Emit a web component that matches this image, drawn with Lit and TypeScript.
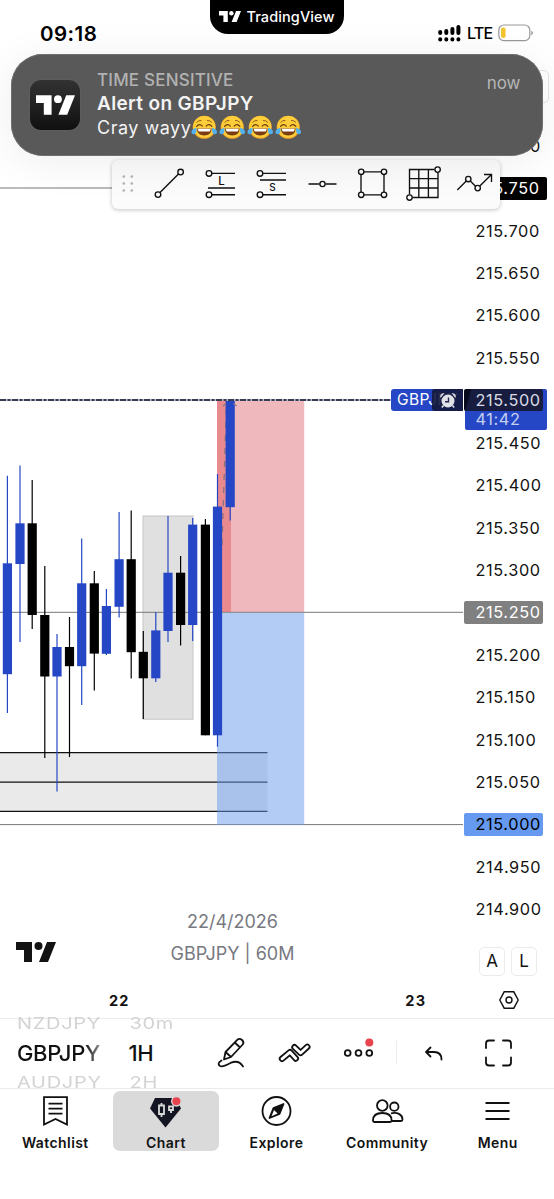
import { LitElement, html, css, svg } from "lit";
import { customElement } from "lit/decorators.js";

// center x, high, body top, body bottom, low, rising
type Candle = [number, number, number, number, number, boolean];
const candles: Candle[] = [
  [7.4, 475.7, 563.3, 674.2, 713, true],
  [20, 465.5, 523.3, 564, 642, true],
  [32.2, 480, 523.3, 615, 629, false],
  [44.8, 566, 615, 676.5, 758, false],
  [57, 634, 647, 676.5, 791.5, true],
  [69.5, 617, 647, 666.2, 757, false],
  [81.7, 538.5, 583.3, 666.2, 705, true],
  [94.3, 571, 583.3, 653.6, 690.5, false],
  [106.4, 589, 606, 653.8, 655, true],
  [119.1, 512, 559.2, 606.8, 617.5, true],
  [131.2, 510.5, 559.2, 652.2, 678.5, false],
  [143.3, 631, 651.8, 678.3, 719, false],
  [155.8, 612, 630.4, 678.3, 682, true],
  [168, 516, 572.7, 631, 642, true],
  [180.6, 556, 572.7, 625, 645.5, false],
  [192.7, 518, 524.6, 625, 641, true],
  [205.4, 519, 524.6, 735.3, 735.3, false],
  [217.5, 474, 506.6, 735.3, 746.8, true],
  [230.2, 400, 400, 507.2, 520.5, true],
];

const prices = [
  "215.800", "215.750", "215.700", "215.650", "215.600", "215.550", "215.500",
  "215.450", "215.400", "215.350", "215.300", "215.250", "215.200", "215.150",
  "215.100", "215.050", "215.000", "214.950", "214.900",
];
const priceTone: Record<string, string> = {
  "215.750": "black",
  "215.500": "live",
  "215.250": "gray",
  "215.000": "blue",
};

const logo = (cls: string) => html`<svg class=${cls} viewBox="0 0 40 20" fill="currentColor">
  <path d="M0 0H16V20H8V8H0Z" /><circle cx="22.5" cy="4" r="4" /><path d="M31 0H40L32 20H23Z" />
</svg>`;

const joy = svg`
  <circle cx="12" cy="11.5" r="10.9" fill="#f3a928" />
  <circle cx="12" cy="11.1" r="10.2" fill="#fdce3a" />
  <path d="M5 6.800q1.600-2 4-1.700M19 6.800q-1.600-2-4-1.700" fill="none" stroke="#8a5a18" stroke-width=".9" stroke-linecap="round" />
  <path d="M4.800 10.800q2.700-3.400 5.400-.4M19.200 10.800q-2.700-3.400-5.400-.4" fill="none" stroke="#6a3d10" stroke-width="1.100" stroke-linecap="round" />
  <path d="M5 12.600h14q-.5 6.600-7 6.600t-7-6.600Z" fill="#7a3c12" />
  <path d="M5.800 12.900h12.400l-.9 2.700H6.700Z" fill="#fff" />
  <path d="M4.500 12q.9 5.800-2.300 6.200-2.600 0-2.200-2.600.6-2.600 4.500-3.600ZM19.500 12q-.9 5.800 2.300 6.200 2.600 0 2.200-2.600-.6-2.600-4.500-3.600Z" fill="#52b2ef" />`;

@customElement("price-plot")
class PricePlot extends LitElement {
  static styles = css`
    :host { display: block; }
    svg { display: block; width: 463px; height: 857px; }
  `;
  render() {
    return html`<svg viewBox="0 125 463 857">
      <rect x="143" y="516" width="50" height="203.2" fill="#e0e0e0" stroke="#c6c6c6" />
      <rect x="0" y="752.5" width="267.5" height="59" fill="#eaeaea" />
      <path d="M0 752.7H267.5M0 782.1H267.5M0 811.4H267.5" stroke="#111" stroke-width="1.3" />
      <path d="M0 188H463M0 612.3H463M0 824.6H463" stroke="#777" stroke-width="1" />
      <rect x="217" y="400" width="87.2" height="212" fill="#d64d58" fill-opacity=".4" />
      <rect x="217" y="400" width="14" height="212" fill="#e0454b" fill-opacity=".4" />
      <rect x="217" y="612.8" width="87.2" height="212" fill="#659aee" fill-opacity=".5" />
      <path d="M222 545L226.500 402" stroke="#8c7280" stroke-width="1.3" stroke-dasharray="6 7" />
      ${candles.map(([x, high, top, bottom, low, up]) => {
        const c = up ? "#2547c5" : "#000";
        return svg`<path d="M${x} ${high}V${low}" stroke=${c} stroke-width="1.2" />
          <rect x=${x - 4.6} y=${top} width="9.2" height=${bottom - top} fill=${c} />`;
      })}
      <path d="M223 406L226 403.500M233.500 403.500L236.500 406" stroke="#8c7280" stroke-width="1.200" />
      <path d="M0 400H391" stroke="#b6b8c4" stroke-width="1.8" />
      <path d="M0 400H391" stroke="#11142e" stroke-width="1.6" stroke-dasharray="6 1.5 3 1.5" />
    </svg>`;
  }
}

@customElement("drawing-toolbar")
class DrawingToolbar extends LitElement {
  static styles = css`
    :host { display: block; width: 388px; height: 49px; background: #fbfbfb; border-radius: 6px; box-shadow: 0 1px 4px rgba(0, 0, 0, 0.24); }
    svg { display: block; }
  `;
  render() {
    return html`<svg width="388" height="49" viewBox="112 160 388 49" fill="none" stroke="#111" stroke-width="1.35">
      <g fill="#b2b2b2" stroke="none">
        ${[176.5, 183.5, 190.5].map((y) => svg`<circle cx="123.8" cy=${y} r="1.3" /><circle cx="131.8" cy=${y} r="1.3" />`)}
      </g>
      <path d="M160 192.5L178.5 174" /><circle cx="158" cy="194.6" r="2.8" /><circle cx="180.6" cy="172" r="2.8" />
      <circle cx="209" cy="173.4" r="2.8" /><path d="M212 173.4H235M208 188H235M212 194.7H235" /><circle cx="209" cy="194.7" r="2.8" />
      <circle cx="260" cy="173.4" r="2.8" /><path d="M263 173.4H286M260 180H286M263 194.7H286" /><circle cx="260" cy="194.7" r="2.8" />
      <path d="M308.5 184H319.5M325.5 184H336.5" /><circle cx="322.5" cy="184" r="2.6" />
      <path d="M361 174.5V192M364 171.8H381M384 174.5V192M364 194.8H381" />
      <circle cx="361.2" cy="171.8" r="2.7" /><circle cx="384" cy="171.8" r="2.7" /><circle cx="361.2" cy="194.8" r="2.7" /><circle cx="384" cy="194.8" r="2.7" />
      <path d="M409.5 194.5V169.5H434.5M438 172.5V197.5H412.5M418.8 169.5V197.5M428.4 169.5V197.5M409.5 178.6H438M409.5 188H438" />
      <circle cx="437.6" cy="169.6" r="2.7" /><circle cx="409.5" cy="197.5" r="2.7" />
      <path d="M457.3 190L466.3 181M470.3 181L475.5 186.2M479.8 186L491.5 174.5M484 174.5H491.5V182" />
      <circle cx="468.3" cy="179" r="2.7" /><circle cx="477.7" cy="188.1" r="2.7" />
      <g fill="#111" stroke="none" font-family="Inter, sans-serif" text-anchor="middle">
        <text x="221.5" y="185" font-size="11.5" font-weight="500">L</text>
        <text x="272.5" y="191" font-size="10" font-weight="500">S</text>
      </g>
    </svg>`;
  }
}

@customElement("alert-banner")
class AlertBanner extends LitElement {
  static styles = css`
    :host { display: flex; box-sizing: border-box; width: 532px; height: 102px; padding: 0 22.5px 0 19px; gap: 17px; border-radius: 32px; background: #595959; color: #f3f3f3; box-shadow: inset 0 0 0 0.7px #777, 0 6px 44px rgba(0, 0, 0, 0.07); font: 400 18px/24px Inter, sans-serif; }
    .app { width: 50px; height: 50px; margin-top: 26px; border-radius: 11px; background: linear-gradient(#323232, #101010); color: #fff; display: grid; place-items: center; box-shadow: 0 0 1px #888; }
    .mark { width: 39px; height: 20px; }
    .copy { flex: 1; padding-top: 14px; white-space: nowrap; }
    .kind { font-size: 17px; color: #b2b2b2; font-weight: 500; letter-spacing: 0.2px; }
    .title { font-size: 19px; font-weight: 600; letter-spacing: 0.35px; }
    .body { display: flex; align-items: center; letter-spacing: 0.5px; height: 24px; }
    .face { width: 26.5px; height: 25.500px; margin-right: 1.5px; }
    .time { margin-top: 17px; color: #b6b6b6; font-size: 17px; }
  `;
  render() {
    return html`<div class="app">${logo("mark")}</div>
      <div class="copy">
        <div class="kind">TIME SENSITIVE</div>
        <div class="title">Alert on GBPJPY</div>
        <div class="body">Cray wayy${[0, 1, 2, 3].map(() => html`<svg class="face" viewBox="-0.5 0 25 24" role="img" aria-label="😂">${joy}</svg>`)}</div>
      </div>
      <div class="time">now</div>`;
  }
}

const tabs = [
  { name: "Watchlist", icon: svg`<path d="M4 2.2H27V29.6L15.5 24L4 29.6Z M8.5 8.6H22.5M8.5 13.6H22.5M8.5 18.6H22.5" />` },
  {
    name: "Chart",
    icon: svg`<path d="M5 3H26L31 13.5L15.5 32.5L0 13.5Z" fill="#131522" stroke="none" />
      <path d="M9 10.5H14V19H9ZM11.5 8V10.5M11.5 19V22" stroke="#dadada" stroke-width="1.8" />
      <path d="M19 11.5H23V15H19ZM21 15V18" stroke="#dadada" stroke-width="1.8" />
      <circle cx="26.4" cy="6.3" r="5.4" fill="#dadada" stroke="none" /><circle cx="26.4" cy="6.3" r="4" fill="#e8444d" stroke="none" />`,
  },
  {
    name: "Explore",
    icon: svg`<circle cx="15.5" cy="16" r="14" /><path d="M22.5 9L18.5 19L8.5 23L12.5 13Z" fill="#111" stroke-linejoin="round" /><path d="M13 15L16.6 18.4L10.5 21.2Z" fill="#fff" stroke="none" />`,
  },
  {
    name: "Community",
    icon: svg`<circle cx="10.3" cy="10.5" r="5.3" /><circle cx="22.3" cy="11.7" r="4.2" /><path d="M1 25.5C1 20.5 4.500 18 10.3 18S19.600 20.500 19.600 25.500Q19.600 27 18 27H2.600Q1 27 1 25.500ZM19 18.300C26 16.800 30.500 20 30.500 24.500Q30.500 26 29 26H19.500" />`,
  },
  { name: "Menu", icon: svg`<path d="M3.500 8H27.500M3.500 16H27.500M3.500 24H27.500" />` },
];

@customElement("app-root")
class AppRoot extends LitElement {
  static styles = css`
    :host { display: flex; flex-direction: column; position: relative; box-sizing: border-box; width: 554px; height: 1199px; overflow: hidden; background: #fff; color: #131313; font-family: Inter, sans-serif; }
    .status { height: 125px; display: grid; grid-template-columns: 210px 134px 210px; align-items: start; }
    .clock { padding: 21px 0 0 40px; font: 600 20.5px/25px Inter, sans-serif; color: #000; letter-spacing: 0.45px; }
    .island { height: 34px; border-radius: 0 0 18px 18px; background: #000; color: #fff; display: flex; align-items: center; justify-content: center; gap: 5px; font-weight: 500; font-size: 14.5px; letter-spacing: 0.1px; padding-bottom: 1px; box-sizing: border-box; }
    .island-mark { width: 22px; height: 11px; }
    .signals { display: flex; align-items: center; padding: 21px 0 0 94px; gap: 6px; font: 500 16px/24px Inter, sans-serif; letter-spacing: -0.8px; color: #000; }
    .chart { height: 893px; flex: none; display: grid; grid-template: 857px 36px / 463px 91px; }
    .plot { position: relative; }
    .watermark { position: absolute; left: 132.500px; width: 200px; top: 781px; text-align: center; color: #777981; font-size: 18px; line-height: 32px; }
    .brand { position: absolute; left: 16px; top: 817px; width: 40px; height: 20px; }
    .symbol { position: absolute; right: 0; top: 264px; width: 72px; height: 22px; border-radius: 3px 0 0 3px; background: #2547c5; color: #fff; font-size: 15.5px; line-height: 22px; text-indent: 6px; letter-spacing: 0.35px; overflow: hidden; }
    .alarm { position: absolute; right: 0; top: 0; width: 31px; height: 22px; border-radius: 3px 0 0 3px; background: rgba(19, 23, 56, 0.9); }
    .alarm svg { display: block; }
    .axis { display: flex; flex-direction: column; }
    .price { height: 42.43px; display: flex; align-items: center; padding-left: 1px; }
    .price span { box-sizing: border-box; font-size: 16.3px; letter-spacing: 0.62px; line-height: 23px; padding-left: 11.500px; width: 79px; border-radius: 2px; white-space: nowrap; }
    .black span { background: #000; color: #fff; width: 83px; }
    .gray span { background: #808080; color: #fff; }
    .blue span { background: #6699f0; color: #000; }
    .live { position: relative; }
    .live span { background: linear-gradient(105deg, #080b1d 6px, #181d40 8px); color: #d9dbe4; line-height: 22px; position: relative; top: -0.500px; }
    .live .count { position: absolute; left: 1.500px; top: 9px; width: 82px; height: 41px; padding: 21px 0 0 11px; line-height: 19px; background: #2547c5; color: #c5cff1; }
    .modes { display: flex; gap: 6px; padding: 15.500px 0 0 16px; }
    .mode { box-sizing: border-box; width: 26px; height: 29px; border: 1.500px solid #ebebeb; border-radius: 5px; font-size: 17px; line-height: 27px; text-align: center; }
    .dates { display: grid; grid-template-columns: 238.500px 1fr; font: 700 14.500px/37px Inter, sans-serif; letter-spacing: 1.200px; }
    .dates div { text-align: center; }
    .dates .next { padding-left: 130px; }
    .settings { display: block; margin: 8px 0 0 35px; }
    .controls { box-sizing: border-box; height: 71px; flex: none; border-block: 1.500px solid #ebebeb; display: grid; grid-template-columns: 129px 71px 1fr; }
    .wheel { padding-left: 17px; display: grid; grid-template-rows: 13px 42px 13px; }
    .wheel.period { padding-left: 0.500px; }
    .wheel div { font-size: 20px; line-height: 13px; color: #d3d3d3; letter-spacing: 0.700px; transform: scaleY(0.76); white-space: nowrap; }
    .wheel div:first-child { position: relative; top: -1px; }
    .wheel div:last-child { position: relative; top: 2.500px; }
    .wheel .current { font-size: 22px; line-height: 42px; font-weight: 500; color: #111; letter-spacing: -0.350px; transform: none; }
    .wheel.period .current { margin-left: -1px; }
    .wheel .fade { background: linear-gradient(90deg, #111 68px, #aaa 86px); background-clip: text; -webkit-background-clip: text; color: transparent; }
    .tabs { display: grid; grid-template-columns: repeat(5, 1fr); padding-top: 2px; margin: 0 1px 0 0; }
    .tab { height: 60px; margin: 0 2.500px; border-radius: 7px; display: flex; flex-direction: column; align-items: center; padding-top: 4px; box-sizing: border-box; font-size: 14px; font-weight: 600; letter-spacing: 0.420px; line-height: 19px; gap: 5px; }
    .tab svg { width: 31px; height: 33px; flex: none; overflow: visible; }
    .active { background: #dadada; }
    .toolbar { position: absolute; left: 112px; top: 160px; }
    .banner { position: absolute; left: 11px; top: 54px; }
    .peek { position: absolute; left: 510px; top: 70px; width: 39px; height: 33px; box-sizing: border-box; border: 1px solid #e4e4e4; border-radius: 5px; }
  `;

  render() {
    return html`
      <header class="status">
        <div class="clock">09:18</div>
        <div class="island">${logo("island-mark")}TradingView</div>
        <div class="signals">
          <svg width="23" height="18" viewBox="0 0 23 18" stroke="#000" stroke-width="4" stroke-linecap="round">
            <path d="M2.200 8V9M8.300 7V9M14.400 5V9M20.400 3V9M2.200 15.200V15.500M8.300 15.200V15.500M14.400 15.200V15.500M20.400 15.200V15.500" />
          </svg>LTE
          <svg width="36" height="18" viewBox="0 0 36 18">
            <rect x=".8" y="1" width="31" height="15.600" rx="5" fill="#fff" stroke="#999" stroke-width="1.200" />
            <rect x="3" y="3.600" width="4.600" height="10.400" rx="2" fill="#f4c52f" /><path d="M33.500 6.500Q36 9 33.500 11.500Z" fill="#777" />
          </svg>
        </div>
      </header>
      <section class="chart">
        <div class="plot">
          <price-plot></price-plot>
          <div class="symbol">GBPJPY
            <div class="alarm"><svg width="31" height="22" viewBox="0 0 31 22" fill="#e1e2e8">
              <circle cx="16" cy="12" r="6.500" /><path d="M8.500 9Q7 4.500 12.500 4ZM23.500 9Q25 4.500 19.500 4Z" /><path d="M11.500 16.500L9.800 18.500M20.500 16.500L22.200 18.500" stroke="#e1e2e8" stroke-width="1.600" />
              <path d="M16.500 8.500V12.700H13" fill="none" stroke="#20244a" stroke-width="1.400" />
            </svg></div>
          </div>
          <div class="watermark">22/4/2026<br />GBPJPY | 60M</div>
          ${logo("brand")}
        </div>
        <div class="axis">
          ${prices.map((p) => html`<div class="price ${priceTone[p] ?? ""}">
            ${p === "215.500" ? html`<span class="count">41:42</span>` : ""}<span>${p}</span>
          </div>`)}
          <div class="modes"><div class="mode">A</div><div class="mode">L</div></div>
        </div>
        <div class="dates"><div>22</div><div class="next">23</div></div>
        <svg class="settings" width="22" height="20" viewBox="0 0 22 20" fill="none" stroke="#111" stroke-width="1.400">
          <path d="M6.200 1.800H15.800L20.200 10L15.800 18.200H6.200L1.800 10Z" /><circle cx="11" cy="10" r="3" />
        </svg>
      </section>
      <section class="controls">
        <div class="wheel"><div>NZDJPY</div><div class="current fade">GBPJPY</div><div>AUDJPY</div></div>
        <div class="wheel period"><div>30m</div><div class="current">1H</div><div>2H</div></div>
        <svg width="354" height="68" viewBox="200 1019 354 68" fill="none" stroke="#111" stroke-width="1.800" stroke-linecap="round" stroke-linejoin="round">
          <path d="M225.500 1052L237.500 1039.700Q239.500 1037.800 242 1040Q244.500 1042.500 242.700 1044.500L231 1057L224 1059.500ZM225.500 1052L231 1057M234.800 1042.500L240 1047.500" />
          <path d="M221.500 1060.500Q216.500 1063.500 220 1066Q223 1067.300 231 1062.700Q239 1059.700 243 1066.500" />
          <path d="M282 1058.800L290 1052.200L295.800 1058.500M294.500 1047.200L300.600 1053L307.300 1046.800" stroke-width="6.400" />
          <path d="M282 1058.800L290 1052.200L295.800 1058.500M294.500 1047.200L300.600 1053L307.300 1046.800" stroke="#fff" stroke-width="2.800" />
          <circle cx="347.700" cy="1053" r="2.900" /><circle cx="358.500" cy="1053" r="2.900" /><circle cx="369.300" cy="1053" r="2.900" />
          <circle cx="369.300" cy="1042.400" r="4" fill="#e8444d" stroke="none" />
          <path d="M396.500 1041V1064" stroke="#ececec" stroke-width="1" />
          <path d="M430.500 1047.500L426 1052L430.500 1056.500M426.500 1052H434Q441.500 1052 441.500 1059.500" />
          <path d="M486 1048V1043.500Q486 1040.500 489 1040.500H494M503 1040.500H508Q511 1040.500 511 1043.500V1048M511 1057.500V1062.500Q511 1065.500 508 1065.500H503M494 1065.500H489Q486 1065.500 486 1062.500V1057.500" />
        </svg>
      </section>
      <nav class="tabs">
        ${tabs.map((t) => html`<div class="tab ${t.name === "Chart" ? "active" : ""}">
          <svg viewBox="0 0 31 33" fill="none" stroke="#111" stroke-width="1.800">${t.icon}</svg>${t.name}
        </div>`)}
      </nav>
      <div class="peek"></div>
      <drawing-toolbar class="toolbar"></drawing-toolbar>
      <alert-banner class="banner"></alert-banner>
    `;
  }
}
